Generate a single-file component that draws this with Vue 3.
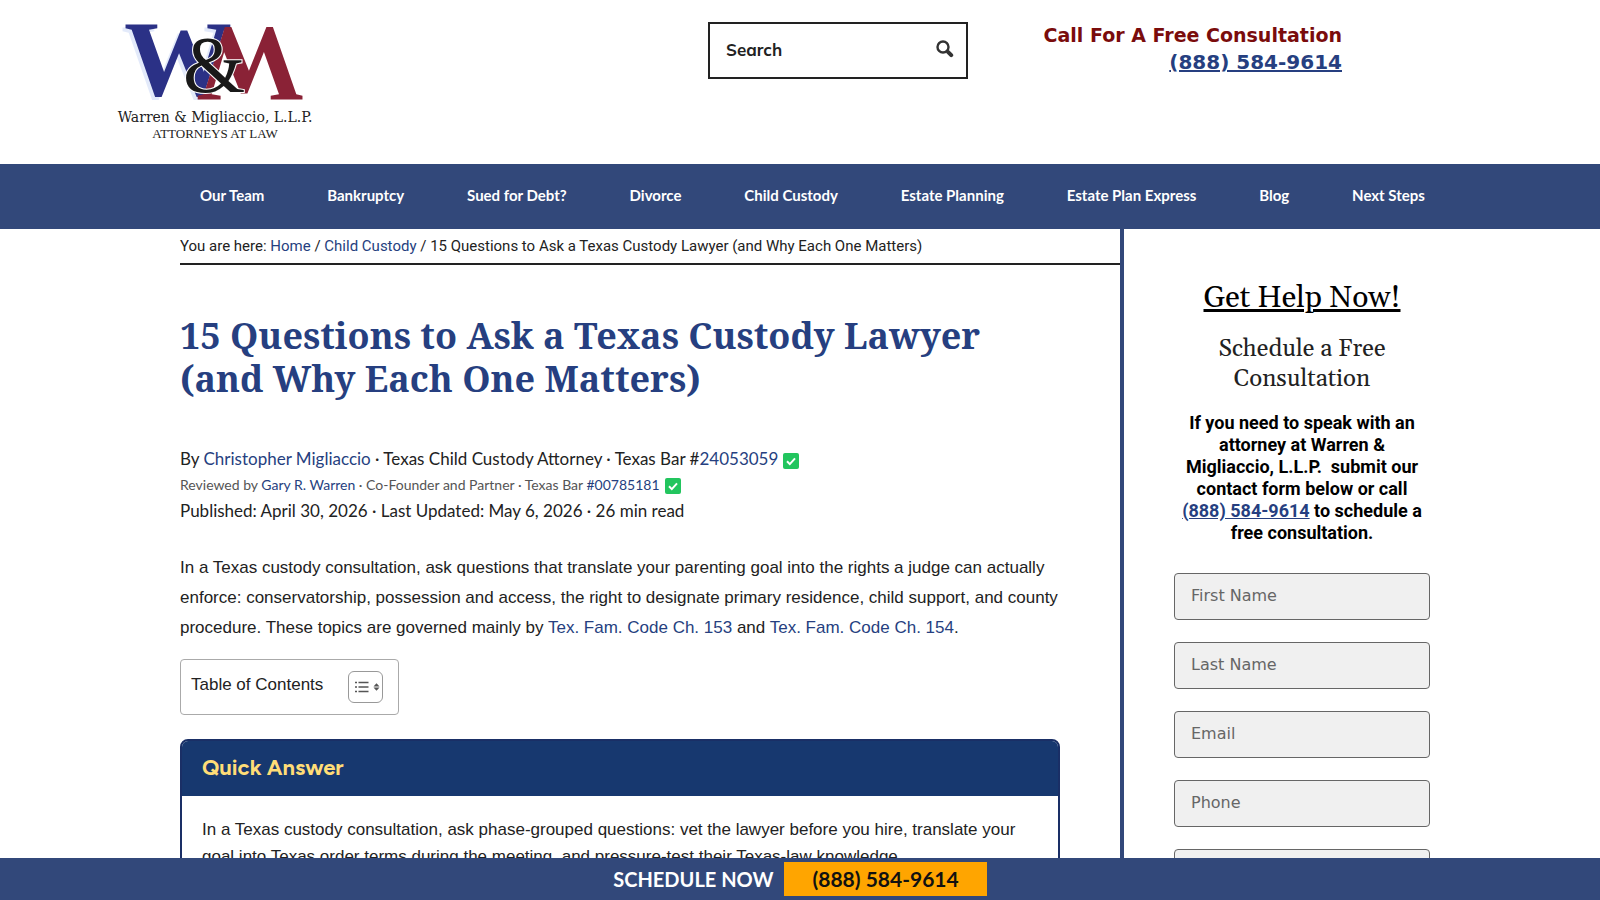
<script setup>
const navItems = ['Our Team', 'Bankruptcy', 'Sued for Debt?', 'Divorce', 'Child Custody', 'Estate Planning', 'Estate Plan Express', 'Blog', 'Next Steps']
const fields = [
  { id: 'first-name', label: 'First Name', type: 'text' },
  { id: 'last-name', label: 'Last Name', type: 'text' },
  { id: 'email', label: 'Email', type: 'email' },
  { id: 'phone', label: 'Phone', type: 'tel' },
  { id: 'message', label: '', type: 'text' }
]
</script>

<template>
  <div class="page">
    <header class="top">
      <a class="logo" href="#" aria-label="Warren &amp; Migliaccio, L.L.P.">
        <svg width="200" height="124" viewBox="0 0 200 124" role="img" aria-hidden="true">
          <text class="mono blue" x="4" y="73">W</text>
          <text class="mono red" transform="translate(184 7) rotate(180)" x="0" y="0">W</text>
          <text class="amp" x="63" y="70">&amp;</text>
          <text class="firm" x="95" y="100" text-anchor="middle">Warren &amp; Migliaccio, L.L.P.</text>
          <text class="tag" x="95" y="116" text-anchor="middle">ATTORNEYS AT LAW</text>
        </svg>
      </a>
      <form class="search" role="search" @submit.prevent>
        <input type="search" placeholder="Search" aria-label="Search" />
        <button type="submit" aria-label="Submit search">
          <svg width="18" height="18" viewBox="0 0 18 18">
            <circle cx="7" cy="7" r="5.5" fill="none" stroke="#333" stroke-width="2.4" />
            <path d="M12.2 12.2l3 3" stroke="#333" stroke-width="4" stroke-linecap="round" />
          </svg>
        </button>
      </form>
      <div class="call">
        <div>Call For A Free Consultation</div>
        <a href="tel:8885849614">(888) 584-9614</a>
      </div>
    </header>

    <nav class="nav" aria-label="Main">
      <ul>
        <li v-for="item in navItems" :key="item"><a href="#">{{ item }}</a></li>
      </ul>
    </nav>

    <div class="wrap">
      <main class="main">
        <div class="crumbs">You are here: <a href="#">Home</a> / <a href="#">Child Custody</a> / 15 Questions to Ask a Texas Custody Lawyer (and Why Each One Matters)</div>
        <article class="article">
          <h1>15 Questions to Ask a Texas Custody Lawyer (and Why Each One Matters)</h1>
          <div class="byline">
            By <a href="#">Christopher Migliaccio</a> · Texas Child Custody Attorney · Texas Bar #<a href="#">24053059</a>
            <svg class="check" width="16" height="16" viewBox="0 0 16 16"><rect width="16" height="16" rx="2" fill="#22c55e" /><path d="M4 8.3l2.8 2.8L12 5.4" fill="none" stroke="#fff" stroke-width="2" /></svg>
          </div>
          <div class="review">
            Reviewed by <a href="#">Gary R. Warren</a> · Co-Founder and Partner · Texas Bar <a href="#">#00785181</a>
            <svg class="check" width="16" height="16" viewBox="0 0 16 16"><rect width="16" height="16" rx="2" fill="#22c55e" /><path d="M4 8.3l2.8 2.8L12 5.4" fill="none" stroke="#fff" stroke-width="2" /></svg>
          </div>
          <div class="byline">Published: April 30, 2026 · Last Updated: May 6, 2026 · 26 min read</div>
          <p class="intro">In a Texas custody consultation, ask questions that translate your parenting goal into the rights a judge can actually enforce: conservatorship, possession and access, the right to designate primary residence, child support, and county procedure. These topics are governed mainly by <a href="#">Tex. Fam. Code Ch. 153</a> and <a href="#">Tex. Fam. Code Ch. 154</a>.</p>
          <div class="toc">
            <span>Table of Contents</span>
            <button type="button" aria-label="Toggle table of contents">
              <svg width="26" height="14" viewBox="0 0 26 14">
                <path d="M1 2.5h2M1 7h2M1 11.5h2M4.5 2.5h10M4.5 7h10M4.5 11.5h10" stroke="#555" stroke-width="1.4" />
                <path d="M19.5 6.5L22.5 3.2l3 3.3zM19.5 7.5L22.5 10.8l3-3.3z" fill="#555" />
              </svg>
            </button>
          </div>
          <section class="answer">
            <h2>Quick Answer</h2>
            <p>In a Texas custody consultation, ask phase-grouped questions: vet the lawyer before you hire, translate your goal into Texas order terms during the meeting, and pressure-test their Texas-law knowledge.</p>
          </section>
        </article>
      </main>

      <aside class="side">
        <h2>Get Help Now!</h2>
        <h3>Schedule a Free Consultation</h3>
        <p>If you need to speak with an attorney at Warren &amp; Migliaccio, L.L.P. &nbsp;submit our contact form below or call <a href="tel:8885849614">(888) 584-9614</a> to schedule a free consultation.</p>
        <form @submit.prevent>
          <input v-for="f in fields" :key="f.id" :id="f.id" :type="f.type" :placeholder="f.label" :aria-label="f.label || f.id" />
        </form>
      </aside>
    </div>

    <div class="bar">
      <span>SCHEDULE NOW</span>
      <a href="tel:8885849614">(888) 584-9614</a>
    </div>
  </div>
</template>

<style>
body { margin: 0; background: #fff; }
</style>

<style scoped>
.page { height: 100vh; overflow: hidden; color: #222; font-family: "Liberation Sans", Arial, sans-serif; }
a { color: #263f80; text-decoration: none; }
.top { display: grid; grid-template-columns: 588px 260px 1fr; align-items: start; max-width: 1360px; min-height: 164px; margin: 0 auto; padding: 22px 138px 0 0; box-sizing: border-box; }
.logo svg { display: block; overflow: visible; }
.mono { font: bold 108px "Liberation Serif", serif; }
.blue { fill: #2b3186; filter: drop-shadow(-3px 3px 0 #e3eafa); }
.red { fill: #8a2236; }
.amp { font: 80px "Liberation Serif", serif; fill: #191919; stroke: #fff; stroke-width: 2px; paint-order: stroke; }
.firm { font: 14px "DejaVu Serif", serif; fill: #222; }
.tag { font: 13px "Liberation Serif", serif; fill: #222; }
.search { display: flex; align-items: center; height: 57px; border: 2px solid #222; box-sizing: border-box; padding: 0 12px 2px 16px; }
.search input { flex: 1; min-width: 0; padding: 0; border: 0; outline: 0; background: none; font: bold 17px Mulish, Lato, sans-serif; }
.search input::placeholder { color: #222; opacity: 1; }
.search button { padding: 0; border: 0; background: none; height: 20px; }
.call { text-align: right; font: bold 19px/27px Verdana, "DejaVu Sans", sans-serif; color: #7a0c0c; white-space: nowrap; }
.call a { font-size: 20px; text-decoration: underline; }
.nav { background: #32487a; }
.nav ul { display: flex; justify-content: space-between; max-width: 1260px; height: 65px; align-items: center; margin: 0 auto; padding: 0 5px 4px 30px; box-sizing: border-box; list-style: none; }
.nav a { display: block; color: #fff; font: bold 15px/20px Lato, sans-serif; }
.wrap { display: flex; max-width: 1260px; margin: 0 auto; padding-left: 10px; box-sizing: border-box; }
.main { flex: 1; }
.crumbs { padding: 6px 0; border-bottom: 2px solid #222; font: 15px/22px Roboto, sans-serif; }
.article { padding: 49px 60px 60px 0; }
h1 { margin: 0 0 45px; font: bold 36px/43px "Noto Serif", "Droid Serif", "DejaVu Serif", serif; color: #263f80; }
.byline { font: 17px/28px Lato, sans-serif; }
.review { font: 14px/24px Lato, sans-serif; color: #555; }
.check { vertical-align: -4px; margin-left: 5px; }
.intro { margin: 28px 0 16px; font-size: 17px; line-height: 30px; }
.toc { display: inline-flex; justify-content: space-between; gap: 25px; border: 1px solid #aaa; border-radius: 4px; padding: 11px 15px 11px 10px; font-size: 17px; line-height: 28px; }
.toc button { display: flex; align-items: center; width: 35px; height: 32px; padding: 0 0 0 5px; border: 1px solid #999; border-radius: 6px; background: #fff; }
.toc svg { flex: none; }
.answer { margin-top: 24px; border: 2px solid #1a2f66; border-radius: 8px; overflow: hidden; }
.answer h2 { margin: 0; padding: 12px 20px 13px; background: #17386f; color: #ffdd77; font: bold 22px/30px Figtree, Montserrat, Lato, sans-serif; }
.answer p { margin: 0; padding: 20px; font-size: 17px; line-height: 27px; }
.side { width: 256px; flex: none; border-left: 4px solid #32487a; padding: 51px 0 0 50px; text-align: center; }
.side h2 { margin: 0 0 18px; font: 30px/36px Georgia, Gelasio, serif; color: #000; text-decoration: underline; }
.side h3 { margin: 0 20px 18px; font: 24px/30px Georgia, Gelasio, serif; color: #222; }
.side p { margin: 0 0 29px; font: bold 18px/22px Roboto, sans-serif; color: #000; }
.side p a { text-decoration: underline; }
.side form { display: flex; flex-direction: column; gap: 22px; }
.side input { box-sizing: border-box; height: 47px; border: 1px solid #666; border-radius: 4px; background: #f0f0f0; padding: 0 16px 2px; font: 16px "DejaVu Sans", sans-serif; }
.side input::placeholder { color: #666; opacity: 1; }
.bar { position: fixed; left: 0; right: 0; bottom: 0; display: flex; align-items: center; justify-content: center; gap: 11px; height: 42px; background: #32487a; color: #fff; font: bold 20px/34px Lato, sans-serif; }
.bar a { background: #ffa500; color: #111; padding: 0 28px; font-size: 21px; }
</style>
